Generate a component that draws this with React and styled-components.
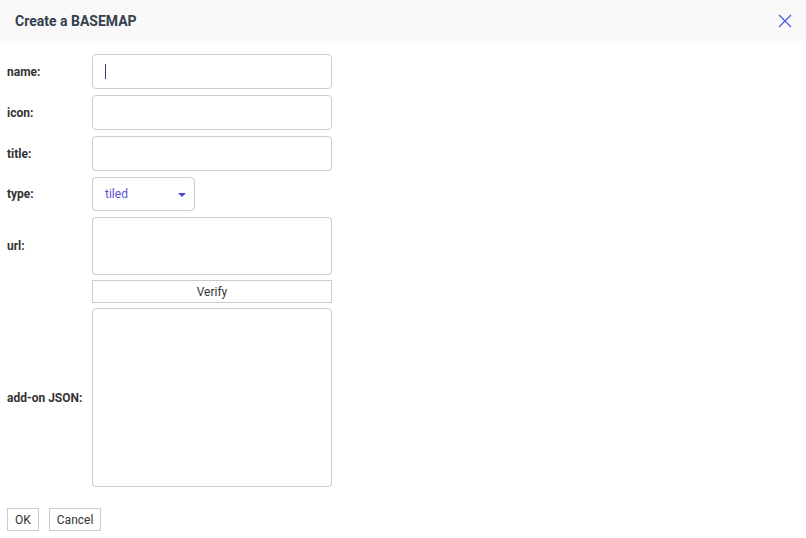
import React from "react";
import styled, { createGlobalStyle } from "styled-components";

const Global = createGlobalStyle`
  html, body { margin: 0; padding: 0; background: #fff; }
  body { font-family: Roboto, "Liberation Sans", Arial, sans-serif; }
  * { box-sizing: border-box; }
`;

const Dialog = styled.div`
  width: 806px;
  height: 538px;
  background: #fff;
  display: flex;
  flex-direction: column;
`;

const Header = styled.div`
  height: 41px;
  background: #f9f9f9;
  display: flex;
  align-items: center;
  justify-content: space-between;
  padding: 0 14px 0 15px;
`;

const Title = styled.h1`
  margin: 0;
  font-size: 14px;
  font-weight: 700;
  color: #34404f;
  letter-spacing: 0;
`;

const CloseButton = styled.button`
  border: none;
  background: transparent;
  padding: 0;
  width: 14px;
  height: 14px;
  display: flex;
  align-items: center;
  justify-content: center;
  cursor: pointer;
`;

const Form = styled.form`
  display: flex;
  flex-direction: column;
  padding: 13px 7px 0 7px;
`;

const Row = styled.div`
  display: grid;
  grid-template-columns: 85px 240px;
  align-items: center;
  margin-top: ${(p) => p.$gap ?? 6}px;
  &:first-child { margin-top: 0; }
`;

const Label = styled.label`
  font-size: 12px;
  font-weight: 700;
  color: #333;
`;

const FieldWrap = styled.div`
  position: relative;
  display: flex;
`;

const Input = styled.input`
  width: 240px;
  height: 35px;
  border: 1px solid #ccc;
  border-radius: 4px;
  padding: 0 12px;
  font-family: inherit;
  font-size: 12px;
  color: #333;
  outline: none;
  background: #fff;
`;

const Caret = styled.span`
  position: absolute;
  left: 13px;
  top: 10px;
  width: 1px;
  height: 15px;
  background: #3a3aa8;
`;

const TextArea = styled.textarea`
  width: 240px;
  height: ${(p) => p.$h}px;
  border: 1px solid #ccc;
  border-radius: 4px;
  padding: 6px 12px;
  font-family: inherit;
  font-size: 12px;
  resize: none;
  outline: none;
  display: block;
`;

const Select = styled.div`
  width: 103px;
  height: 34px;
  border: 1px solid #ccc;
  border-radius: 4px;
  display: flex;
  align-items: center;
  justify-content: space-between;
  padding: 0 8px 0 12px;
  font-size: 12px;
  color: #5b4fd1;
`;

const Arrow = styled.span`
  width: 0;
  height: 0;
  border-left: 4px solid transparent;
  border-right: 4px solid transparent;
  border-top: 4px solid #4646d8;
  margin-top: 1px;
`;

const VerifyButton = styled.button`
  width: 240px;
  height: 23px;
  border: 1px solid #ccc;
  border-radius: 0;
  background: #fff;
  font-family: inherit;
  font-size: 12px;
  color: #333;
  padding: 0;
`;

const Footer = styled.div`
  display: flex;
  gap: 10px;
  padding: 21px 7px 0 7px;
`;

const FootButton = styled.button`
  height: 23px;
  border: 1px solid #ccc;
  border-radius: 0;
  background: #fff;
  font-family: inherit;
  font-size: 12px;
  color: #333;
  padding: 0 7px;
`;

export default function App() {
  return (
    <>
      <Global />
      <Dialog>
        <Header>
          <Title>Create a BASEMAP</Title>
          <CloseButton aria-label="close">
            <svg width="14" height="14" viewBox="0 0 14 14">
              <path d="M1 1 L13 13 M13 1 L1 13" stroke="#4c5fe6" strokeWidth="1.4" fill="none" />
            </svg>
          </CloseButton>
        </Header>
        <Form onSubmit={(e) => e.preventDefault()}>
          <Row>
            <Label>name:</Label>
            <FieldWrap>
              <Input />
              <Caret />
            </FieldWrap>
          </Row>
          <Row>
            <Label>icon:</Label>
            <FieldWrap><Input /></FieldWrap>
          </Row>
          <Row>
            <Label>title:</Label>
            <FieldWrap><Input /></FieldWrap>
          </Row>
          <Row>
            <Label>type:</Label>
            <FieldWrap>
              <Select>
                <span>tiled</span>
                <Arrow />
              </Select>
            </FieldWrap>
          </Row>
          <Row>
            <Label>url:</Label>
            <FieldWrap><TextArea $h={58} /></FieldWrap>
          </Row>
          <Row $gap={5}>
            <span />
            <FieldWrap><VerifyButton type="button">Verify</VerifyButton></FieldWrap>
          </Row>
          <Row $gap={5}>
            <Label>add-on JSON:</Label>
            <FieldWrap><TextArea $h={179} /></FieldWrap>
          </Row>
        </Form>
        <Footer>
          <FootButton type="button">OK</FootButton>
          <FootButton type="button">Cancel</FootButton>
        </Footer>
      </Dialog>
    </>
  );
}
